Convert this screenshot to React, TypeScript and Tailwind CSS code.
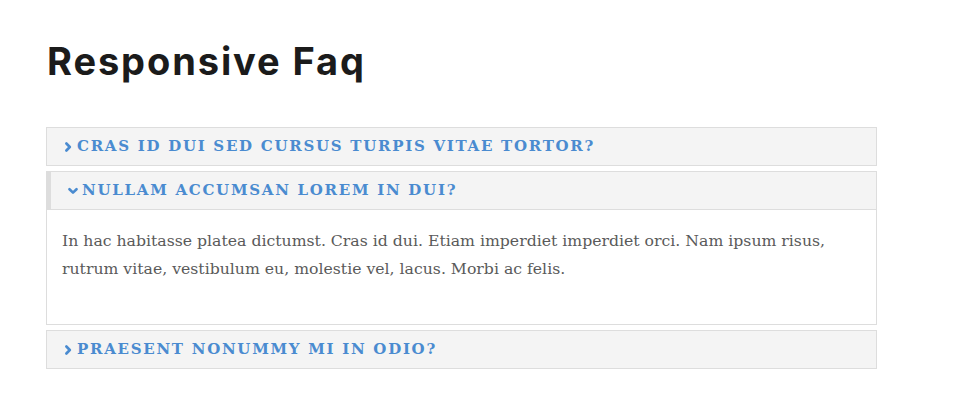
import { useState } from "react";

const faqs = [
  {
    q: "Cras id dui sed cursus turpis vitae tortor?",
    a: "In hac habitasse platea dictumst. Cras id dui. Etiam imperdiet imperdiet orci. Nam ipsum risus, rutrum vitae, vestibulum eu, molestie vel, lacus. Morbi ac felis.",
  },
  {
    q: "Nullam accumsan lorem in dui?",
    a: "In hac habitasse platea dictumst. Cras id dui. Etiam imperdiet imperdiet orci. Nam ipsum risus, rutrum vitae, vestibulum eu, molestie vel, lacus. Morbi ac felis.",
  },
  {
    q: "Praesent nonummy mi in odio?",
    a: "In hac habitasse platea dictumst. Cras id dui. Etiam imperdiet imperdiet orci. Nam ipsum risus, rutrum vitae, vestibulum eu, molestie vel, lacus. Morbi ac felis.",
  },
];

function Chevron({ open }: { open: boolean }) {
  return (
    <svg
      viewBox="0 0 10 10"
      className="w-[10px] h-[10px] shrink-0"
      fill="none"
      stroke="#4a8bd0"
      strokeWidth={2.6}
      strokeLinecap="round"
      strokeLinejoin="round"
    >
      {open ? <path d="M1.5 3.2 L5 6.6 L8.5 3.2" /> : <path d="M3.4 1.5 L6.8 5 L3.4 8.5" />}
    </svg>
  );
}

export default function App() {
  const [openIdx, setOpenIdx] = useState<number | null>(1);

  return (
    <div className="min-h-screen bg-white pt-[38px] pl-[47px] pr-[91px]">
      {/* Title */}
      <h1 className="text-[38px] leading-[46px] font-bold text-[#1b1b1b] font-['Inter',sans-serif] tracking-[0.05em]">
        Responsive Faq
      </h1>

      {/* Accordion */}
      <div className="mt-[43px] w-[831px] -ml-px flex flex-col gap-[5px]">
        {faqs.map((item, i) => {
          const open = openIdx === i;
          return (
            <div key={i} className="border border-[#dddddd]">
              <button
                onClick={() => setOpenIdx(open ? null : i)}
                className={`w-full flex items-center gap-[4px] bg-[#f4f4f4] text-left ${
                  open ? "h-[38px] border-l-[4px] border-[#dddddd] pl-[17px] border-b" : "h-[37px] pl-[16px]"
                }`}
              >
                <Chevron open={open} />
                <span className="text-[15px] font-bold uppercase tracking-[0.115em] text-[#4a8bd0] font-['DejaVu_Serif',serif]">
                  {item.q}
                </span>
              </button>
              {open && (
                <div className="px-[15px] pt-[17px] pb-[41px] bg-white">
                  <p className="text-[15.7px] leading-[28px] text-[#5a5a5a] font-['DejaVu_Serif',serif]">
                    {item.a}
                  </p>
                </div>
              )}
            </div>
          );
        })}
      </div>
    </div>
  );
}
